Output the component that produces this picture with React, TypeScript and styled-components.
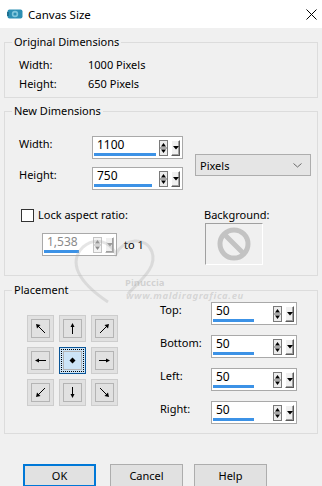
import styled, {createGlobalStyle} from "styled-components";

const GlobalStyle = createGlobalStyle`
    html, body {
        margin: 0;
        padding: 0;
        width: 322px;
        height: 486px;
        overflow: hidden;
        background: #f0f0f0;
    }

    body {
        font-family: "Noto Sans", "Open Sans", sans-serif;
        font-size: 11px;
        color: #000;
    }
`;

type Dir = "nw" | "n" | "ne" | "w" | "c" | "e" | "sw" | "s" | "se";

const ARROWS: Record<Dir, { line?: [number, number, number, number]; head: string }> = {
    nw: {line: [12, 12, 4, 4], head: "3,3 7.5,4 4,7.5"},
    n: {line: [7.5, 13, 7.5, 4], head: "7.5,2 5.5,6 9.5,6"},
    ne: {line: [3, 12, 11, 4], head: "12,3 7.5,4 11,7.5"},
    w: {line: [13, 7.5, 4, 7.5], head: "2,7.5 6,5.5 6,9.5"},
    c: {head: "7.5,4.5 10.5,7.5 7.5,10.5 4.5,7.5"},
    e: {line: [2, 7.5, 11, 7.5], head: "13,7.5 9,5.5 9,9.5"},
    sw: {line: [12, 3, 4, 11], head: "3,12 4,7.5 7.5,11"},
    s: {line: [7.5, 2, 7.5, 11], head: "7.5,13 5.5,9 9.5,9"},
    se: {line: [3, 3, 11, 11], head: "12,12 7.5,11 11,7.5"},
};

const GRID: Dir[] = ["nw", "n", "ne", "w", "c", "e", "sw", "s", "se"];

const SPIN_ROWS = [
    {label: "Top:", value: "50"},
    {label: "Bottom:", value: "50"},
    {label: "Left:", value: "50"},
    {label: "Right:", value: "50"},
];

interface SpinProps {
    value: string;
    width: number;
    bar: number;
    disabled?: boolean;
}

const SpinBox = ({value, width, bar, disabled}: SpinProps) => (
    <SpinFrame $width={width}>
        <SpinValue>
            <SpinText $disabled={disabled}>{value}</SpinText>
            <Bar style={{width: bar}}/>
        </SpinValue>
        <UpDown $disabled={disabled}>
            <svg width="7" height="14" viewBox="0 0 7 14">
                <polygon points="3.5,2 6,5.5 1,5.5" fill={disabled ? "#8c8c8c" : "#000"}/>
                <line x1="0" y1="7" x2="7" y2="7" stroke={disabled ? "#b5b5b5" : "#666"}/>
                <polygon points="1,8.5 6,8.5 3.5,12" fill={disabled ? "#8c8c8c" : "#000"}/>
            </svg>
        </UpDown>
        <DropButton $disabled={disabled}>
            <svg width="6" height="4" viewBox="0 0 6 4">
                <polygon points="0,0 6,0 3,3.5" fill={disabled ? "#9a9a9a" : "#000"}/>
            </svg>
        </DropButton>
    </SpinFrame>
);

const App = () => {
    return (
        <>
            <GlobalStyle/>
            <Window>
                <TitleBar>
                    <svg width="16" height="10" viewBox="0 0 16 10">
                        <rect x="0.5" y="0.5" width="15" height="9" rx="2" fill="#2c8fb4"/>
                        <rect x="0" y="3" width="2" height="4" fill="#1f6f8f"/>
                        <circle cx="8" cy="5" r="3.2" fill="#7fc6dc"/>
                        <circle cx="8" cy="5" r="1.6" fill="#2c8fb4"/>
                    </svg>
                    <Title>Canvas Size</Title>
                    <CloseIcon width="11" height="11" viewBox="0 0 11 11">
                        <line x1="0.5" y1="0.5" x2="10.5" y2="10.5" stroke="#000" strokeWidth="1"/>
                        <line x1="10.5" y1="0.5" x2="0.5" y2="10.5" stroke="#000" strokeWidth="1"/>
                    </CloseIcon>
                </TitleBar>

                <Body>
                    <Group>
                        <Legend>Original Dimensions</Legend>
                        <InfoGrid>
                            <span>Width:</span>
                            <span>1000 Pixels</span>
                            <span>Height:</span>
                            <span>650 Pixels</span>
                        </InfoGrid>
                    </Group>

                    <Group $gap={5}>
                        <Legend>New Dimensions</Legend>
                        <NewDims>
                            <TopSection>
                                <SpinColumn $gap={8}>
                                    <SpinRow>
                                        <FieldLabel $width={73}>Width:</FieldLabel>
                                        <SpinBox value="1100" width={91} bar={62}/>
                                    </SpinRow>
                                    <SpinRow>
                                        <FieldLabel $width={73}>Height:</FieldLabel>
                                        <SpinBox value="750" width={91} bar={58}/>
                                    </SpinRow>
                                </SpinColumn>
                                <Select>
                                    <span>Pixels</span>
                                    <svg width="9" height="5" viewBox="0 0 9 5">
                                        <polyline points="0.5,0.5 4.5,4 8.5,0.5" fill="none" stroke="#6a6a6a"/>
                                    </svg>
                                </Select>
                            </TopSection>

                            <LowerSection>
                                <LockColumn>
                                    <CheckRow>
                                        <Checkbox/>
                                        <span>Lock aspect ratio:</span>
                                    </CheckRow>
                                    <RatioRow>
                                        <SpinBox value="1,538" width={75} bar={35} disabled/>
                                        <RatioText>to 1</RatioText>
                                    </RatioRow>
                                </LockColumn>
                                <BackgroundColumn>
                                    <span>Background:</span>
                                    <ColorWell>
                                        <svg width="34" height="34" viewBox="0 0 34 34">
                                            <circle cx="17" cy="17" r="14" fill="none" stroke="#c3c3c3" strokeWidth="5"/>
                                            <line x1="7.5" y1="7.5" x2="26.5" y2="26.5" stroke="#c3c3c3" strokeWidth="5"/>
                                        </svg>
                                    </ColorWell>
                                </BackgroundColumn>
                            </LowerSection>
                        </NewDims>
                    </Group>

                    <Group $gap={6}>
                        <Legend>Placement</Legend>
                        <PlacementBody>
                            <AnchorGrid>
                                {GRID.map((dir) => {
                                    const arrow = ARROWS[dir];
                                    return (
                                        <AnchorButton key={dir} $active={dir === "c"}>
                                            <AnchorInner $active={dir === "c"}>
                                                <svg width="15" height="15" viewBox="0 0 15 15">
                                                    {arrow.line && (
                                                        <line x1={arrow.line[0]} y1={arrow.line[1]}
                                                              x2={arrow.line[2]} y2={arrow.line[3]}
                                                              stroke="#000" strokeWidth="1"/>
                                                    )}
                                                    <polygon points={arrow.head} fill="#000"/>
                                                </svg>
                                            </AnchorInner>
                                        </AnchorButton>
                                    );
                                })}
                            </AnchorGrid>
                            <OffsetColumn>
                                {SPIN_ROWS.map((row) => (
                                    <SpinRow key={row.label}>
                                        <FieldLabel $width={51}>{row.label}</FieldLabel>
                                        <SpinBox value={row.value} width={86} bar={41}/>
                                    </SpinRow>
                                ))}
                            </OffsetColumn>
                        </PlacementBody>
                    </Group>

                    <ButtonBar>
                        <DialogButton $primary>OK</DialogButton>
                        <DialogButton $gap={14}>Cancel</DialogButton>
                        <DialogButton $gap={11}>Help</DialogButton>
                    </ButtonBar>
                </Body>

                {/* faint watermark stamped over the screenshot */}
                <Watermark>
                    <svg width="110" height="80" viewBox="0 0 110 80">
                        <path d="M40 70 C 10 50, 0 30, 15 15 C 28 4, 42 10, 48 22 C 56 6, 78 4, 84 20 C 90 36, 70 50, 60 62"
                              fill="none" stroke="rgba(170,170,170,0.3)" strokeWidth="3"/>
                    </svg>
                    <WatermarkName>Pinuccia</WatermarkName>
                    <WatermarkUrl>www.maldiragrafica.eu</WatermarkUrl>
                </Watermark>
            </Window>
        </>
    );
};

export default App;

const Window = styled.div`
    position: relative;
    width: 322px;
    height: 486px;
    display: flex;
    flex-direction: column;
    background: #f0f0f0;
    overflow: hidden;
`;

const TitleBar = styled.div`
    height: 28px;
    flex-shrink: 0;
    background: #fff;
    display: flex;
    align-items: center;
    padding: 0 4px 0 7px;
    box-sizing: border-box;
`;

const Title = styled.span`
    margin-left: 5px;
    font-size: 11.5px;
    flex: 1;
`;

const CloseIcon = styled.svg`
    margin-right: 1px;
`;

const Body = styled.div`
    padding: 6px 4px 0 4px;
    display: flex;
    flex-direction: column;
`;

const Group = styled.fieldset<{ $gap?: number }>`
    margin: ${({$gap}) => $gap || 0}px 0 0 0;
    padding: 0;
    min-width: 0;
    border: 1px solid #dcdcdc;
`;

const Legend = styled.legend`
    margin-left: 7px;
    padding: 0 2px;
    line-height: 16px;
`;

const InfoGrid = styled.div`
    display: grid;
    grid-template-columns: 69px auto;
    grid-auto-rows: 19px;
    align-items: center;
    padding: 5px 14px 4px 14px;
`;

const NewDims = styled.div`
    padding: 17px 6px 10px 14px;
`;

const TopSection = styled.div`
    display: flex;
    align-items: center;
    gap: 12px;
`;

const SpinColumn = styled.div<{ $gap: number }>`
    display: flex;
    flex-direction: column;
    gap: ${({$gap}) => $gap}px;
`;

const SpinRow = styled.div`
    display: flex;
    align-items: flex-start;
`;

const FieldLabel = styled.span<{ $width: number }>`
    width: ${({$width}) => $width}px;
    line-height: 16px;
    flex-shrink: 0;
`;

const SpinFrame = styled.div<{ $width: number }>`
    width: ${({$width}) => $width}px;
    height: 23px;
    box-sizing: border-box;
    border: 1px solid #a9a9a9;
    background: #fff;
    display: flex;
    align-items: center;
    padding: 0 2px 0 1px;
`;

const SpinValue = styled.div`
    flex: 1;
    display: flex;
    flex-direction: column;
    justify-content: flex-end;
    height: 100%;
    padding-bottom: 2px;
    box-sizing: border-box;
`;

const SpinText = styled.span<{ $disabled?: boolean }>`
    padding-left: 3px;
    line-height: 15px;
    font-size: 12px;
    color: ${({$disabled}) => ($disabled ? "#8a8a8a" : "#000")};
`;

const Bar = styled.div`
    height: 3px;
    margin-top: 1px;
    background: #3c92e6;
`;

const UpDown = styled.div<{ $disabled?: boolean }>`
    width: 7px;
    height: 14px;
    border: 1px solid ${({$disabled}) => ($disabled ? "#c4c4c4" : "#7a7a7a")};
    background: ${({$disabled}) => ($disabled ? "#f4f4f4" : "#ececec")};
    display: flex;

    svg {
        display: block;
    }
`;

const DropButton = styled.div<{ $disabled?: boolean }>`
    width: 9px;
    height: 16px;
    margin-left: 3px;
    box-sizing: border-box;
    background: #f0f0f0;
    border-top: 1px solid #fff;
    border-left: 1px solid #fff;
    border-right: 1px solid ${({$disabled}) => ($disabled ? "#b5b5b5" : "#5a5a5a")};
    border-bottom: 1px solid ${({$disabled}) => ($disabled ? "#b5b5b5" : "#5a5a5a")};
    box-shadow: inset -1px -1px 0 #a0a0a0;
    display: flex;
    align-items: center;
    justify-content: center;
`;

const Select = styled.div`
    width: 117px;
    height: 22px;
    box-sizing: border-box;
    border: 1px solid #adadad;
    background: #e5e5e5;
    display: flex;
    align-items: center;
    justify-content: space-between;
    padding: 0 8px 0 4px;
    margin-top: 4px;
`;

const LowerSection = styled.div`
    display: flex;
    margin-top: 17px;
`;

const LockColumn = styled.div`
    width: 185px;
    display: flex;
    flex-direction: column;
`;

const CheckRow = styled.div`
    display: flex;
    align-items: center;
    gap: 4px;
    line-height: 16px;
`;

const Checkbox = styled.span`
    width: 13px;
    height: 13px;
    margin-left: 2px;
    box-sizing: border-box;
    border: 1px solid #333;
    background: #fff;
`;

const RatioRow = styled.div`
    display: flex;
    align-items: center;
    margin: 10px 0 0 23px;
`;

const RatioText = styled.span`
    margin-left: 7px;
`;

const BackgroundColumn = styled.div`
    display: flex;
    flex-direction: column;
    line-height: 16px;
`;

const ColorWell = styled.div`
    width: 58px;
    height: 42px;
    margin: 0 0 0 1px;
    box-sizing: border-box;
    border-top: 1px solid #a0a0a0;
    border-left: 1px solid #a0a0a0;
    border-right: 1px solid #fff;
    border-bottom: 1px solid #fff;
    display: flex;
    align-items: center;
    justify-content: center;
`;

const PlacementBody = styled.div`
    display: flex;
    align-items: flex-start;
    padding: 0 0 9px 22px;
`;

const AnchorGrid = styled.div`
    display: grid;
    grid-template-columns: repeat(3, 27px);
    grid-auto-rows: 27px;
    gap: 5px;
    margin-top: 17px;
`;

const AnchorButton = styled.div<{ $active?: boolean }>`
    box-sizing: border-box;
    border: 1px solid ${({$active}) => ($active ? "#0a5597" : "#cdcdcd")};
    background: ${({$active}) => ($active ? "#cce4f7" : "#e1e1e1")};
    display: flex;
    align-items: center;
    justify-content: center;
`;

const AnchorInner = styled.div<{ $active?: boolean }>`
    width: 19px;
    height: 19px;
    box-sizing: border-box;
    border: 1px solid #b4b4b4;
    display: flex;
    align-items: center;
    justify-content: center;
    outline: ${({$active}) => ($active ? "1px dotted #000" : "none")};
    outline-offset: 1px;
`;

const OffsetColumn = styled.div`
    display: flex;
    flex-direction: column;
    gap: 10px;
    margin: 4px 0 0 42px;
`;

const ButtonBar = styled.div`
    display: flex;
    margin-top: 30px;
    padding-left: 19px;
`;

const DialogButton = styled.div<{ $primary?: boolean; $gap?: number }>`
    width: 73px;
    height: 23px;
    box-sizing: border-box;
    margin-left: ${({$gap}) => $gap || 0}px;
    border: ${({$primary}) => ($primary ? "2px solid #0078d7" : "1px solid #adadad")};
    background: #e1e1e1;
    display: flex;
    align-items: center;
    justify-content: center;
`;

const Watermark = styled.div`
    position: absolute;
    left: 68px;
    top: 232px;
    width: 230px;
    height: 80px;
    pointer-events: none;

    svg {
        position: absolute;
        left: 0;
        top: 0;
    }
`;

const WatermarkName = styled.span`
    position: absolute;
    left: 57px;
    top: 45px;
    font-size: 9.5px;
    line-height: 11px;
    font-weight: bold;
    color: rgba(150, 150, 150, 0.35);
`;

const WatermarkUrl = styled.span`
    position: absolute;
    left: 58px;
    top: 58px;
    font-size: 9.5px;
    line-height: 11px;
    font-weight: bold;
    font-style: italic;
    letter-spacing: 0.6px;
    color: rgba(150, 150, 150, 0.3);
`;
